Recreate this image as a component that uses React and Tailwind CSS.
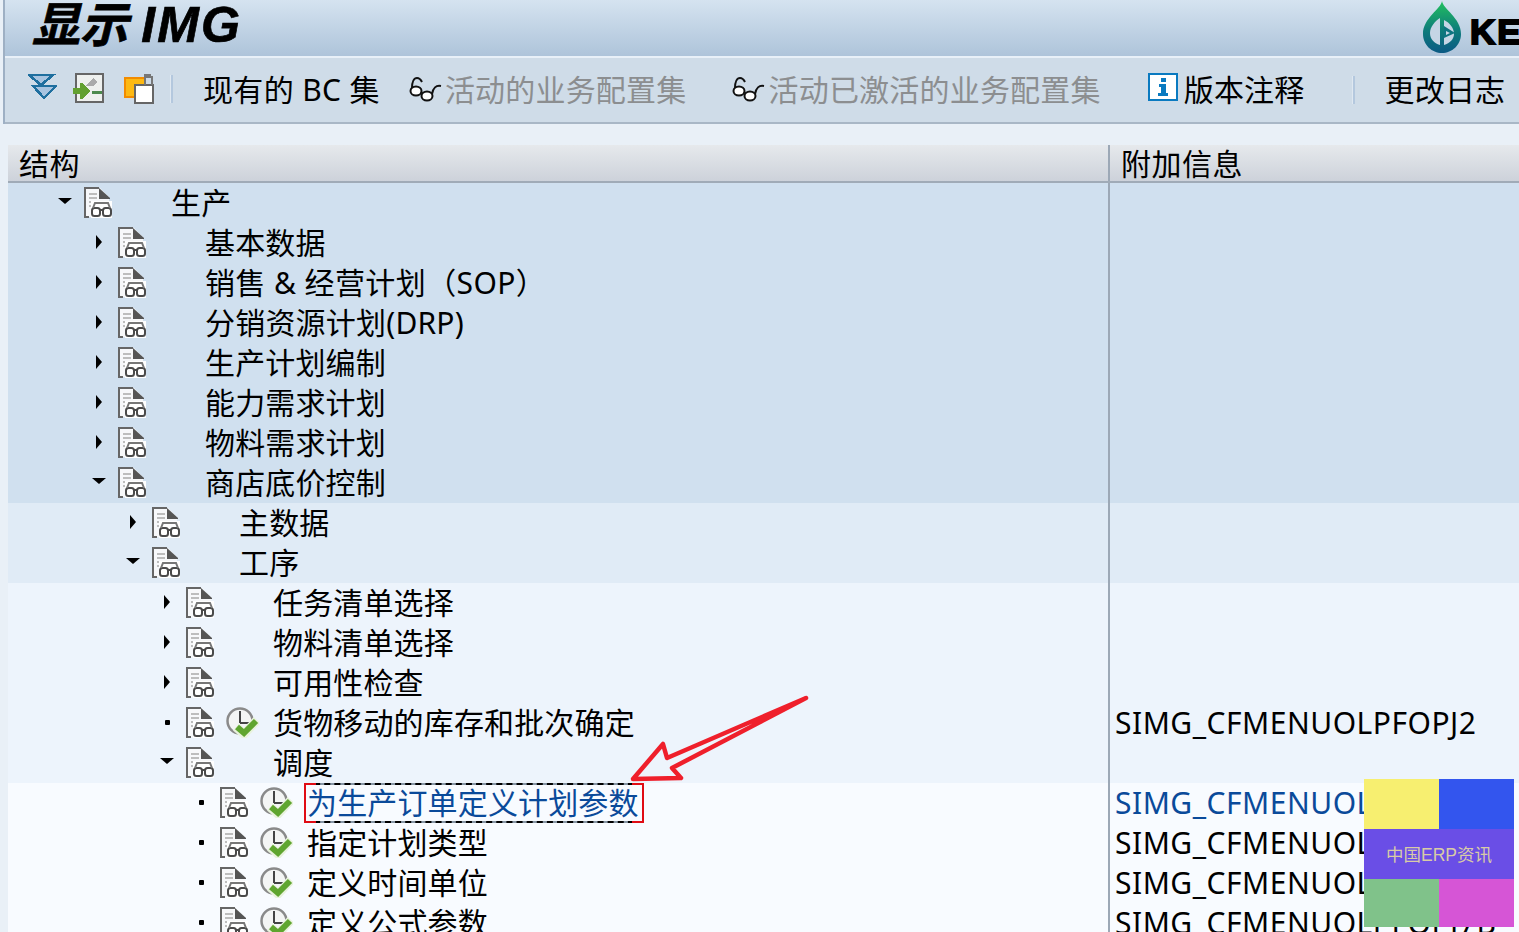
import React from "react";

const FONT = "font-['Noto_Sans','Noto_Sans_CJK_SC',sans-serif]";

function DocIcon() {
  return (
    <svg width="29" height="31" viewBox="0 0 29 31" className="shrink-0">
      <path d="M1 1H16L25 10V15H7V30H1Z" fill="#f7f8fa" />
      <path d="M0 0H15V2H2V29H5V31H0Z" fill="#666" shapeRendering="crispEdges" />
      <path d="M15 1L26 11V12H15Z" fill="#555" />
      <path d="M5 6H13V8H5ZM5 10H13V12H5ZM5 14H12V16H5ZM5 18H7V20H5Z" fill="#bdbdbd" shapeRendering="crispEdges" />
      <path d="M7 14H28V31H7Z" fill="#fff" shapeRendering="crispEdges" />
      <g fill="none" stroke="#4a4a4a" strokeWidth="2">
        <rect x="8" y="21" width="8" height="8" rx="2.5" />
        <rect x="19" y="21" width="8" height="8" rx="2.5" />
        <path d="M16 23H19" />
        <path d="M9 21L11 16H24L26 21" stroke="#777" />
      </g>
    </svg>
  );
}

function ClockIcon() {
  return (
    <svg width="33" height="31" viewBox="0 0 33 31" className="shrink-0">
      <circle cx="14" cy="14" r="12.5" fill="#f4f5f4" stroke="#8a8a8a" strokeWidth="2.5" />
      <path d="M14 4V16M14 16H23" stroke="#444" strokeWidth="2" fill="none" />
      <path d="M10 20L18 27L31 13" stroke="#e8f2dc" strokeWidth="9" fill="none" />
      <path d="M11 20L18 26L30 14" stroke="#5fa52f" strokeWidth="6" fill="none" />
    </svg>
  );
}

function Expander({ type }) {
  return (
    <div className="w-[14px] h-[14px] flex items-center justify-center shrink-0">
      {type === "down" && <div className="w-0 h-0 border-x-[7px] border-x-transparent border-t-[6px] border-t-black mb-[4px]" />}
      {type === "right" && <div className="w-0 h-0 border-y-[7px] border-y-transparent border-l-[6px] border-l-black mb-[2px]" />}
      {type === "dot" && <div className="w-[5px] h-[5px] bg-black rounded-[1px] mb-[1px]" />}
    </div>
  );
}

const PAD = ["pl-[50px]", "pl-[84px]", "pl-[118px]", "pl-[152px]", "pl-[186px]"];

const ROWS = [
  { l: 0, e: "down", t: "生产", bg: "bg-[#d0e0ef]" },
  { l: 1, e: "right", t: "基本数据", bg: "bg-[#d0e0ef]" },
  { l: 1, e: "right", t: "销售 & 经营计划（SOP）", tx: "tracking-[0.4px]", bg: "bg-[#d0e0ef]" },
  { l: 1, e: "right", t: "分销资源计划(DRP)", tx: "tracking-[0.2px]", bg: "bg-[#d0e0ef]" },
  { l: 1, e: "right", t: "生产计划编制", bg: "bg-[#d0e0ef]" },
  { l: 1, e: "right", t: "能力需求计划", bg: "bg-[#d0e0ef]" },
  { l: 1, e: "right", t: "物料需求计划", bg: "bg-[#d0e0ef]" },
  { l: 1, e: "down", t: "商店底价控制", bg: "bg-[#d0e0ef]" },
  { l: 2, e: "right", t: "主数据", bg: "bg-[#e0ebf6]" },
  { l: 2, e: "down", t: "工序", bg: "bg-[#e0ebf6]" },
  { l: 3, e: "right", t: "任务清单选择", bg: "bg-[#edf4fc]" },
  { l: 3, e: "right", t: "物料清单选择", bg: "bg-[#edf4fc]" },
  { l: 3, e: "right", t: "可用性检查", bg: "bg-[#edf4fc]" },
  { l: 3, e: "dot", t: "货物移动的库存和批次确定", clock: true, info: "SIMG_CFMENUOLPFOPJ2", bg: "bg-[#edf4fc]" },
  { l: 3, e: "down", t: "调度", bg: "bg-[#edf4fc]" },
  { l: 4, e: "dot", t: "为生产订单定义计划参数", clock: true, sel: true, info: "SIMG_CFMENUOLPFOPJ7A", bg: "bg-[#f8fbff]" },
  { l: 4, e: "dot", t: "指定计划类型", clock: true, info: "SIMG_CFMENUOLPFOPJ7C", bg: "bg-[#f8fbff]" },
  { l: 4, e: "dot", t: "定义时间单位", clock: true, info: "SIMG_CFMENUOLPFOPJ7D", bg: "bg-[#f8fbff]" },
  { l: 4, e: "dot", t: "定义公式参数", clock: true, info: "SIMG_CFMENUOLPFOPJ7B", bg: "bg-[#f8fbff]" },
];

function Row({ r }) {
  return (
    <div className={`flex h-[40px] shrink-0 ${r.bg}`}>
      <div className={`w-[1100px] shrink-0 flex items-center ${PAD[r.l]}`}>
        <Expander type={r.e} />
        <div className="ml-[12px] mb-[1px]"><DocIcon /></div>
        <div className="w-[58px] pl-[11px] shrink-0 mb-[1px]">{r.clock && <ClockIcon />}</div>
        {r.sel ? (
          <div className="relative -ml-[3px] h-[40px] flex items-center border-2 border-[#8796a5] pl-[1px] pr-[3px] text-[#0a4a9a] whitespace-nowrap tracking-[0.15px]">
            <span className="absolute -inset-[2px] border-2 border-dashed border-black" />
            <span className="absolute -left-[2px] -top-[2px] -bottom-[2px] w-[12px] border-2 border-r-0 border-[#e00c14]" />
            <span className="absolute -right-[2px] -top-[2px] -bottom-[2px] w-[12px] border-2 border-l-0 border-[#e00c14]" />
            {r.t}
          </div>
        ) : (
          <span className={`whitespace-nowrap ${r.tx || "tracking-[0.15px]"}`}>{r.t}</span>
        )}
      </div>
      <div className="w-[2px] bg-[#9ca8b6] shrink-0" />
      <div className={`pl-[5px] whitespace-nowrap flex items-center tracking-[0.5px] ${r.sel ? "text-[#0a4a9a]" : ""}`}>{r.info}</div>
    </div>
  );
}

function Glasses() {
  return (
    <svg width="34" height="26" viewBox="0 0 34 26" fill="none" stroke="#111" strokeWidth="2" className="shrink-0">
      <ellipse cx="7" cy="14" rx="5.5" ry="4.5" fill="#fff" />
      <ellipse cx="18" cy="19" rx="5.5" ry="4.5" fill="#fff" />
      <path d="M3 11C3 5 5 1 8 1C11 1 12 3 13 5M12 15L13 16M23 17C24 11 27 8 32 9" />
    </svg>
  );
}

function Sep({ className }) {
  return <div className={`w-[3px] h-[28px] bg-[#b4c8de] border-l border-[#dfe8f1] shrink-0 ${className}`} />;
}

export default function App() {
  return (
    <div className={`relative w-[1519px] h-[932px] overflow-hidden bg-[#e9f0f7] text-[30px] leading-[40px] text-black ${FONT}`}>
      <div className="ml-[3px] border-l-2 border-[#9eb0c4] h-[124px] flex flex-col">
        <div className="h-[56px] shrink-0 bg-gradient-to-b from-[#d5e3f0] to-[#aec4da] flex items-start overflow-hidden pl-[27px] relative">
          <span className="font-bold italic text-[48px] leading-[50px] [-webkit-text-stroke:0.7px_black] font-['Liberation_Sans','Noto_Sans_CJK_SC',sans-serif] whitespace-nowrap">显示 <span className="text-[50px] tracking-[2px]">IMG</span></span>
          <div className="ml-auto flex items-start h-full shrink-0 w-[97px]">
            <svg width="40" height="52" viewBox="0 0 40 52" className="shrink-0 mt-[1px]">
              <defs>
                <linearGradient id="lg" x1="0" y1="0" x2="0" y2="1">
                  <stop offset="0" stopColor="#22c15e" />
                  <stop offset="0.55" stopColor="#0e7d7a" />
                  <stop offset="1" stopColor="#0b5a84" />
                </linearGradient>
              </defs>
              <path d="M20 0C21 8 39 17 39 33C39 44 30 52 20 52C10 52 1 44 1 33C1 17 19 8 20 0Z" fill="url(#lg)" />
              <path d="M18 17V44C12 42 8 38 8 32C8 26 13 20 18 17ZM22 19C28 22 32 27 32 33C32 38 28 42 22 44Z" fill="#c5d5e5" />
              <path d="M22 25L33 32L22 37Z" fill="#0e7480" />
              <path d="M24 30L28 32L24 34Z" fill="#c5d5e5" />
            </svg>
            <span className="ml-[8px] mt-[6px] font-black text-[35px] leading-[52px] tracking-[2px] font-['Liberation_Sans',sans-serif] [-webkit-text-stroke:2px_black] whitespace-nowrap">KEU</span>
          </div>
        </div>
        <div className="h-[2px] shrink-0 bg-[#e8f0f8]" />
        <div className="flex-1 bg-[#cfdce8] border-b-2 border-[#a9b7c6] flex items-center pl-[23px] whitespace-nowrap">
          <svg width="29" height="28" viewBox="0 0 29 28" shapeRendering="crispEdges" className="shrink-0 -mt-[5px]">
            <path d="M1 1H25L13 11Z" fill="#a8c4e0" stroke="#1f6f9f" strokeWidth="2.5" />
            <path d="M5 12H28L16 24Z" fill="#a8c4e0" stroke="#1f6f9f" strokeWidth="2.5" />
          </svg>
          <svg width="32" height="31" viewBox="0 0 32 31" shapeRendering="crispEdges" className="ml-[16px] shrink-0 -mt-[3px]">
            <path d="M3 1H30V29H3Z" fill="#eef0ee" stroke="#666" strokeWidth="2" />
            <path d="M12 5H20M21 5L24 9L21 13H12Z" fill="#aaa" />
            <path d="M19 18H29V21H19Z" fill="#4d8a4d" />
            <path d="M0 15H7V10H10L17 18L10 26H7V21H0Z" fill="#62a030" />
          </svg>
          <svg width="32" height="32" viewBox="0 0 32 32" shapeRendering="crispEdges" className="ml-[19px] shrink-0 -mt-[3px]">
            <path d="M1 5H21V24H1Z" fill="#fdb913" stroke="#f28c00" strokeWidth="2.5" />
            <path d="M11 12H29V30H11Z" fill="#fff" stroke="#666" strokeWidth="2" />
            <path d="M20 1H27V3H29V12H27V5H22V12H20Z" fill="#777" />
          </svg>
          <Sep className="ml-[14px] -mt-[2px]" />
          <span className="ml-[30px] tracking-[0.35px]">现有的 BC 集</span>
          <div className="ml-[29px]"><Glasses /></div>
          <span className="ml-[2px] text-[#8c8e90] tracking-[0.2px]">活动的业务配置集</span>
          <div className="ml-[46px]"><Glasses /></div>
          <span className="ml-[2px] text-[#8c8e90] tracking-[0.2px]">活动已激活的业务配置集</span>
          <svg width="30" height="30" viewBox="0 0 30 30" shapeRendering="crispEdges" className="ml-[47px] mb-[4px] shrink-0">
            <rect x="1" y="1" width="28" height="26" fill="#fff" stroke="#0a7ac0" strokeWidth="2" />
            <path d="M13 5H18V9H13ZM11 11H18V20H20V23H10V20H13V14H11Z" fill="#0a7ac0" />
          </svg>
          <span className="ml-[6px] tracking-[0.2px]">版本注释</span>
          <Sep className="ml-[47px]" />
          <span className="ml-[30px] tracking-[0.2px]">更改日志</span>
        </div>
      </div>

      <div className="pl-[8px] pt-[21px] flex flex-col">
        <div className="flex h-[38px] shrink-0 bg-gradient-to-b from-[#e6e9ec] to-[#cdd2da] border-b-2 border-[#a0abb7]">
          <div className="w-[1100px] shrink-0 pl-[11px] leading-[38px] tracking-[0.5px]">结构</div>
          <div className="w-[2px] bg-[#9ca8b6] shrink-0" />
          <div className="pl-[11px] leading-[38px] tracking-[0.5px]">附加信息</div>
        </div>
        {ROWS.map((r, i) => <Row key={i} r={r} />)}
      </div>

      <svg width="190" height="100" viewBox="0 0 190 100" fill="none" className="absolute left-[625px] top-[690px]">
        <path d="M8 89L38 54L42 68L181 8L47 78L56 88Z" stroke="#ef1f2b" strokeWidth="4.5" strokeLinejoin="round" />
      </svg>

      <div className="absolute left-[1364px] top-[779px] w-[150px] h-[148px] flex flex-col">
        <div className="flex h-[50px]">
          <div className="flex-1 bg-[#f7ef70]" />
          <div className="flex-1 bg-[#3355ee]" />
        </div>
        <div className="h-[50px] pt-[2px] bg-[#6a4ee6] text-[#d8cba6] text-[17.5px] flex items-center justify-center font-['Liberation_Sans','Noto_Sans_CJK_SC',sans-serif] whitespace-nowrap">中国ERP资讯</div>
        <div className="flex h-[48px]">
          <div className="flex-1 bg-[#80c28a]" />
          <div className="flex-1 bg-[#d655d6]" />
        </div>
      </div>
    </div>
  );
}
